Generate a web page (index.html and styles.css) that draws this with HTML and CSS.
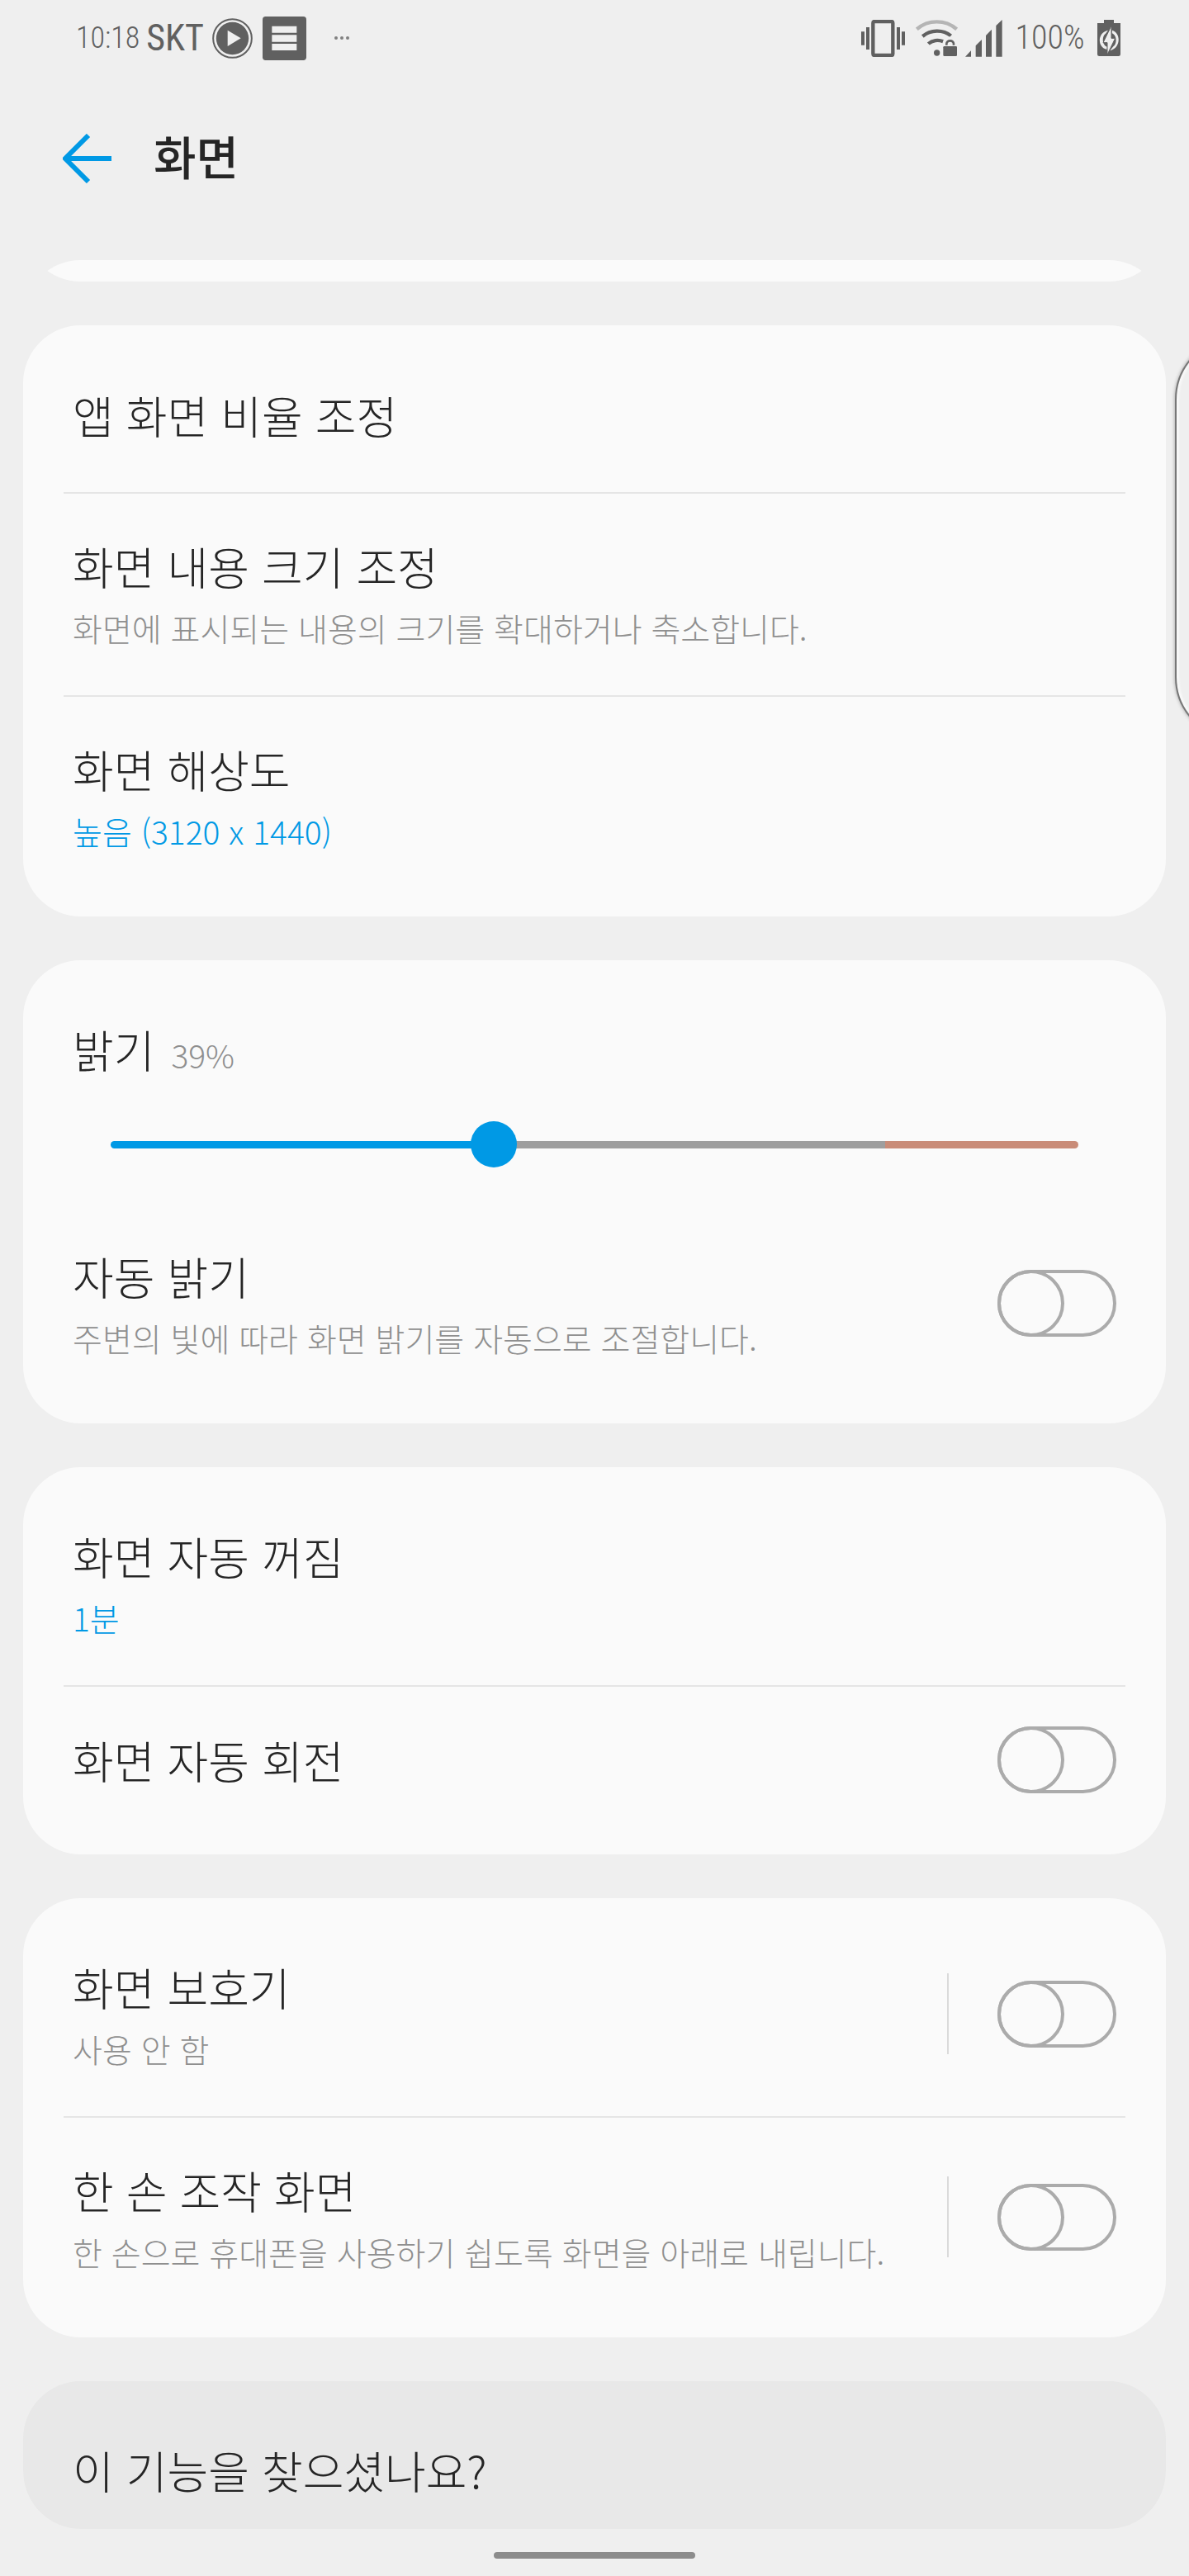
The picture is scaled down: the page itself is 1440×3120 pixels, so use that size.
FILE: index.html
```html
<!DOCTYPE html>
<html lang="ko">
<head>
<meta charset="utf-8">
<meta name="viewport" content="width=device-width, initial-scale=1">
<title>화면</title>
<link rel="stylesheet" href="styles.css">
</head>
<body>
<div class="screen">
  <div class="status">
    <div class="status-left">
      <span class="clock">10:18</span>
      <span class="carrier">SKT</span>
      <svg class="icon-play" viewBox="0 0 147 147" aria-hidden="true">
        <circle cx="73.500" cy="73.500" r="70" fill="none" stroke="#606060" stroke-width="6"/>
        <circle cx="73.500" cy="73.500" r="59" fill="#606060"/>
        <path d="M56 44v58l48-29z" fill="#efefef"/>
      </svg>
      <svg class="icon-list" viewBox="0 0 159 159" aria-hidden="true">
        <rect width="159" height="159" rx="11" fill="#606060"/>
        <path d="M34 35h90v24H34zM34 67h90v25H34zM34 99h90v24H34z" fill="#efefef"/>
      </svg>
      <svg class="icon-more" viewBox="0 0 54 12" aria-hidden="true" fill="#808080">
        <circle cx="6" cy="6" r="6"/><circle cx="27" cy="6" r="6"/><circle cx="48" cy="6" r="6"/>
      </svg>
    </div>
    <div class="status-right">
      <svg class="icon-vibrate" viewBox="0 0 159 135" aria-hidden="true" fill="#606060">
        <rect x="43" y="6" width="72" height="123" rx="5" fill="none" stroke="#606060" stroke-width="13"/>
        <path d="M0 43h12v49H0zM18 27h12v81H18zM129 27h12v81h-12zM147 43h12v49h-12z"/>
      </svg>
      <svg class="icon-wifi" viewBox="0 0 153 132" aria-hidden="true">
        <g fill="none" stroke="#606060" stroke-width="13">
          <path d="M4 34C45-2 108-2 149 34" stroke="#b5b5b5"/>
          <path d="M25 60C54 36 98 34 128 58"/>
          <path d="M46 87C60 74 82 71 100 79"/>
          <path d="M110 98V86c0-17 30-17 30 0v12" stroke="#efefef" stroke-width="24"/>
          <path d="M112 98V88c0-16 26-16 26 0v10" stroke-width="8"/>
        </g>
        <circle cx="77" cy="120" r="11" fill="#606060"/>
        <rect x="97" y="92" width="54" height="43" rx="5" fill="#efefef"/>
        <rect x="100" y="96" width="50" height="36" rx="4" fill="#606060"/>
      </svg>
      <svg class="icon-signal" viewBox="0 0 135 135" aria-hidden="true" fill="#606060">
        <path d="M0 134l21-22v22zM38 94l22-22v62H38zM75 57l21-22v99H75zM112 21l22-21v134h-22z"/>
      </svg>
      <span class="battery-level">100%</span>
      <svg class="icon-battery" viewBox="0 0 84 132" aria-hidden="true">
        <path d="M24 0h36v12h24v113q0 7-7 7H7q-7 0-7-7V12h24z" fill="#606060"/>
        <path d="M39 38C-1 46-1 100 35 108l1-10C15 91 17 58 30 50zM46 112c39-8 41-64 8-74l-1 11c20 8 18 40 5 48z" fill="#efefef"/>
        <path d="M51 21v46h14L36 127V83H21z" fill="#efefef" stroke="#606060" stroke-width="3"/>
      </svg>
    </div>
  </div>

  <header class="appbar">
    <button class="back" type="button" aria-label="뒤로">
      <svg viewBox="0 0 60 60" aria-hidden="true"><path d="M31 2L3 30l28 28M4 30h55" fill="none" stroke="#0099e5" stroke-width="6"/></svg>
    </button>
    <h1>화면</h1>
  </header>

  <main class="list">
    <section class="card card-scrolled" aria-hidden="true"></section>

    <section class="card">
      <a class="row" href="#"><span class="text"><span class="title">앱 화면 비율 조정</span></span></a>
      <a class="row" href="#"><span class="text"><span class="title">화면 내용 크기 조정</span><span class="sub">화면에 표시되는 내용의 크기를 확대하거나 축소합니다.</span></span></a>
      <a class="row" href="#"><span class="text"><span class="title">화면 해상도</span><span class="sub value">높음 (3120 x 1440)</span></span></a>
    </section>

    <section class="card">
      <div class="brightness">
        <div class="brightness-head"><label class="title" for="level">밝기</label><output class="sub" for="level">39%</output></div>
        <div class="slider"><input id="level" type="range" min="0" max="255" value="101"></div>
      </div>
      <div class="row">
        <label class="text" for="auto"><span class="title">자동 밝기</span><span class="sub">주변의 빛에 따라 화면 밝기를 자동으로 조절합니다.</span></label>
        <input class="toggle" id="auto" type="checkbox" role="switch">
      </div>
    </section>

    <section class="card">
      <a class="row" href="#"><span class="text"><span class="title">화면 자동 꺼짐</span><span class="sub value">1분</span></span></a>
      <div class="row">
        <label class="text" for="rotate"><span class="title">화면 자동 회전</span></label>
        <input class="toggle" id="rotate" type="checkbox" role="switch">
      </div>
    </section>

    <section class="card">
      <div class="row">
        <label class="text" for="saver"><span class="title">화면 보호기</span><span class="sub">사용 안 함</span></label>
        <span class="split"></span>
        <input class="toggle" id="saver" type="checkbox" role="switch">
      </div>
      <div class="row">
        <label class="text" for="onehand"><span class="title">한 손 조작 화면</span><span class="sub">한 손으로 휴대폰을 사용하기 쉽도록 화면을 아래로 내립니다.</span></label>
        <span class="split"></span>
        <input class="toggle" id="onehand" type="checkbox" role="switch">
      </div>
    </section>

    <section class="card card-hint">
      <h2 class="title">이 기능을 찾으셨나요?</h2>
    </section>
  </main>

  <div class="nav"><span class="home"></span></div>
  <div class="edge-handle"></div>
</div>
</body>
</html>
```
FILE: styles.css
```css
*, *::before { box-sizing: border-box; }

body {
  margin: 0;
  background: #efefef;
  color: #252525;
  font-family: "Noto Sans CJK KR", sans-serif;
  font-weight: 300;
}

.screen {
  position: relative;
  display: flex;
  flex-direction: column;
  min-height: 100vh;
  overflow: hidden;
}

/* Status bar */
.status {
  display: flex;
  justify-content: space-between;
  height: 92px;
  padding: 0 83px 0 92px;
  color: #606060;
  font-family: "Roboto Condensed", "Open Sans Condensed", "Liberation Sans Narrow", Roboto, sans-serif;
  font-size: 40px;
  line-height: 48px;
}
.status-left, .status-right { display: flex; align-items: center; }
.clock { font-size: 36px; }
.carrier { margin-left: 8px; font-size: 44px; font-weight: 400; }
.icon-play { width: 49px; height: 49px; margin-left: 10px; }
.icon-list { width: 53px; height: 53px; margin-left: 12px; }
.icon-more { width: 18px; height: 4px; margin-left: 34px; }
.icon-vibrate { width: 53px; height: 45px; }
.icon-wifi { width: 51px; height: 44px; margin-left: 13px; }
.icon-signal { width: 45px; height: 45px; margin-left: 9px; }
.battery-level { width: 115px; text-align: center; }
.icon-battery { width: 28px; height: 44px; }

/* App bar */
.appbar {
  display: flex;
  align-items: center;
  gap: 50px;
  height: 200px;
  margin-bottom: 23px;
  padding: 0 76px;
}
.back { width: 60px; height: 60px; padding: 0; border: 0; background: none; }
.back svg { display: block; width: 60px; height: 60px; }
h1 { margin: 0 0 8px; font-size: 56px; font-weight: 500; line-height: 80px; }

/* Scrolling list of setting cards */
.list {
  display: flex;
  flex-direction: column;
  gap: 53px;
  margin: 0 28px;
  border-radius: 70px;
  overflow: hidden;
}
.card { padding: 20px 49px 22px; border-radius: 70px; background: #fafafa; }
.card-scrolled { height: 160px; margin-top: -134px; }
.card-hint { padding: 68px 60px 31px; background: #e8e8e8; }

.row {
  display: flex;
  align-items: center;
  min-height: 182px;
  padding: 48px 11px 52px;
  color: inherit;
  text-decoration: none;
}
.row + .row { border-top: 2px solid #e5e5e5; }
.text { display: flex; flex: 1; flex-direction: column; gap: 4px; }
.title { margin: 0; font-size: 54px; font-weight: 300; line-height: 80px; }
.sub { color: #8f8f8f; font-size: 39px; line-height: 60px; }
.value { color: #0099e5; }
.split { width: 2px; height: 98px; background: #dadada; }

/* Switches */
.toggle {
  flex: none;
  width: 144px;
  height: 81px;
  margin: 0 0 0 59px;
  appearance: none;
  border: 4px solid #ababab;
  border-radius: 41px;
}
.toggle::before {
  content: "";
  display: block;
  width: 81px;
  height: 81px;
  margin: -4px;
  border: 4px solid #ababab;
  border-radius: 50%;
}
.toggle:checked::before { margin-left: 59px; }

/* Brightness */
.brightness { padding: 48px 11px 44px; }
.brightness-head { display: flex; align-items: baseline; gap: 20px; }
.slider { display: grid; align-items: center; margin: 47px 18px 0; }
.slider::before {
  content: "";
  grid-area: 1 / 1;
  height: 9px;
  margin: 0 28px;
  border-radius: 5px;
  background: linear-gradient(90deg, #0099e5 40%, #9e9e9e 40%, #9e9e9e 80%, #c98c78 80%);
}
.slider input {
  grid-area: 1 / 1;
  width: 100%;
  height: 56px;
  margin: 0;
  appearance: none;
  background: none;
}
.slider input::-webkit-slider-thumb {
  appearance: none;
  width: 56px;
  height: 56px;
  border-radius: 50%;
  background: #0099e5;
}

/* Gesture bar */
.nav { display: flex; flex: 1; align-items: center; justify-content: center; min-height: 56px; padding-top: 6px; }
.home { width: 17%; height: 8px; border-radius: 4px; background: #8c8c8c; }

/* Edge panel handle, partly past the right side of the screen */
.edge-handle {
  position: absolute;
  top: 408px;
  right: -143px;
  width: 160px;
  height: 488px;
  border: 2px solid #777;
  border-radius: 76px;
  background: #efefef;
  box-shadow: 0 0 4px #999, inset 3px 0 2px #f8f8f8;
}
```
